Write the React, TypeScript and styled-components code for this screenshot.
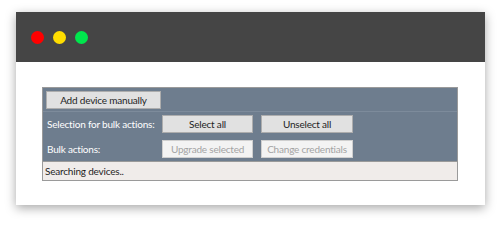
import React, { FC } from 'react';
import styled, { createGlobalStyle } from 'styled-components';

const GlobalStyle = createGlobalStyle`
	html,
	body {
		margin: 0;
		padding: 0;
		background: #ffffff;
	}
`;

const Page = styled.div`
	width: 500px;
	height: 225px;
	padding: 12px 0 0 16px;
	box-sizing: border-box;
`;

const Window = styled.div`
	width: 469px;
	height: 193px;
	background: #ffffff;
	box-shadow: 0 3px 10px rgba(0, 0, 0, 0.35);
	display: flex;
	flex-direction: column;
`;

const TitleBar = styled.div`
	height: 50px;
	background: #454545;
	display: flex;
	align-items: center;
	gap: 9px;
	padding-left: 15px;
	flex-shrink: 0;
`;

const Dot = styled.span<{ $color: string }>`
	width: 13px;
	height: 13px;
	border-radius: 50%;
	background: ${(p) => p.$color};
`;

const Content = styled.div`
	padding: 25px 0 0 26px;
`;

const Panel = styled.div`
	width: 416px;
	border: 1px solid #9a9a9a;
	box-sizing: border-box;
	background: #6e7d8e;
	font-family: Lato, 'Open Sans', sans-serif;
	font-size: 10px;
	letter-spacing: -0.2px;
`;

const Row = styled.div<{ $height: number; $divider?: boolean }>`
	height: ${(p) => p.$height}px;
	display: flex;
	align-items: center;
	padding-left: 3px;
	box-sizing: border-box;
	border-bottom: ${(p) => (p.$divider ? '1px solid #7d8b9b' : 'none')};
`;

const Label = styled.span`
	width: 116px;
	padding-left: 1px;
	box-sizing: border-box;
	color: #ffffff;
	white-space: nowrap;
`;

const Buttons = styled.div`
	display: flex;
	gap: 8px;
`;

const Button = styled.button<{ $width: number }>`
	width: ${(p) => p.$width}px;
	height: 18px;
	padding: 0;
	font-family: inherit;
	font-size: inherit;
	letter-spacing: inherit;
	white-space: nowrap;
	text-align: center;
	color: #1e1e1e;
	background: #e1e1e1;
	border: 1px solid #adadad;

	&:disabled {
		color: #a3a3a3;
		background: #f3f3f3;
		border-color: #cfcfcf;
	}
`;

const Status = styled.div`
	height: 18px;
	background: #f0ecea;
	border-top: 1px solid #9a9a9a;
	padding-left: 2px;
	display: flex;
	align-items: center;
	color: #1e1e1e;
`;

const App: FC = () => {
	return (
		<>
			<GlobalStyle />
			<Page>
				<Window>
					<TitleBar>
						<Dot $color='#ff0000' />
						<Dot $color='#ffdd00' />
						<Dot $color='#00e64d' />
					</TitleBar>
					<Content>
						<Panel>
							<Row $height={24} $divider>
								<Button $width={115}>Add device manually</Button>
							</Row>
							<Row $height={24}>
								<Label>Selection for bulk actions:</Label>
								<Buttons>
									<Button $width={91}>Select all</Button>
									<Button $width={92}>Unselect all</Button>
								</Buttons>
							</Row>
							<Row $height={25}>
								<Label>Bulk actions:</Label>
								<Buttons>
									<Button $width={91} disabled>
										Upgrade selected
									</Button>
									<Button $width={92} disabled>
										Change credentials
									</Button>
								</Buttons>
							</Row>
							<Status>Searching devices..</Status>
						</Panel>
					</Content>
				</Window>
			</Page>
		</>
	);
};

export default App;
